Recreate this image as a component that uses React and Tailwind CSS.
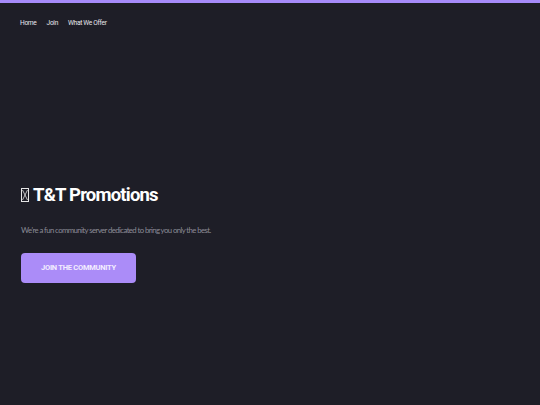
import React from "react"

const Tofu = () => (
  <svg width="8" height="14" viewBox="0 0 8 14" className="mr-[4px] inline-block">
    <rect x="0.5" y="0.5" width="7" height="13" fill="none" stroke="#e5e5e5" strokeWidth="1" />
    <path d="M1.5 2 L6.5 12 M6.5 2 L1.5 12" stroke="#e5e5e5" strokeWidth="0.8" />
  </svg>
)

const App = () => {
  return (
    <div className="w-[540px] h-[405px] bg-[#1e1e27] flex flex-col font-['Lato',sans-serif]">
      <div className="h-[3px] bg-[#a78bfa]" />

      {/* nav */}
      <nav className="flex gap-[10px] px-[20px] pt-[16px] text-[6.6px] text-[#e8e8ee] tracking-[-0.3px] font-['Roboto',sans-serif]">
        <span>Home</span>
        <span>Join</span>
        <span>What We Offer</span>
      </nav>

      {/* hero */}
      <div className="flex flex-col px-[21px] pt-[157px]">
        <h1 className="flex items-center text-[18.5px] font-bold text-white font-['Roboto',sans-serif] tracking-[-0.8px] leading-none">
          <Tofu />
          T&amp;T Promotions
        </h1>
        <p className="mt-[21px] text-[7.8px] text-[#8b8b96] tracking-[-0.6px]">
          We're a fun community server dedicated to bring you only the best.
        </p>
        <button className="mt-[16px] w-[115px] h-[30px] rounded-[4px] bg-[#ab8cf8] text-[7.5px] font-bold text-[#f3eeff] uppercase tracking-[-0.25px] font-['Roboto',sans-serif]">
          Join the community
        </button>
      </div>
    </div>
  )
}

export default App
